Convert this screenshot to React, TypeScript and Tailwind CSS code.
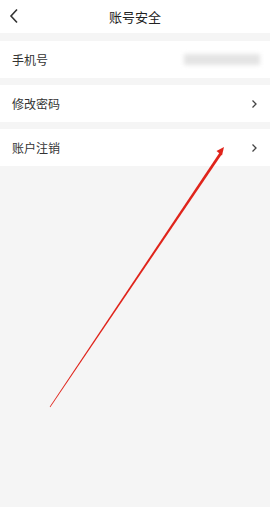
import React from 'react';

const font = { fontFamily: '"Noto Sans CJK SC", "Noto Sans", sans-serif' };

const Chevron = () => (
  <svg width="7" height="10" viewBox="0 0 7 10" fill="none">
    <path d="M1.5 1.5 L5 5 L1.5 8.5" stroke="#444" strokeWidth="1.3" />
  </svg>
);

const Row = ({ label, children }: { label: string; children?: React.ReactNode }) => (
  <div className="flex h-[37px] items-center justify-between bg-white pl-3 pr-[12px]">
    <span className="text-[12px] text-[#333]">{label}</span>
    {children}
  </div>
);

export default function App() {
  return (
    <div className="relative min-h-[507px] w-[270px] bg-[#f5f5f5]" style={font}>
      <div className="relative flex h-[33px] items-center justify-center bg-white">
        <button className="absolute left-[9px] top-[8px]">
          <svg width="10" height="16" viewBox="0 0 10 16" fill="none">
            <path d="M8 1.5 L2 8 L8 14.5" stroke="#333" strokeWidth="1.6" />
          </svg>
        </button>
        <span className="text-[13px] text-[#222]">账号安全</span>
      </div>

      <div className="mt-[8px] flex flex-col gap-[7px]">
        <div className="flex h-[37px] items-center justify-between bg-white pl-3">
          <span className="text-[12px] text-[#333]">手机号</span>
          <div className="mr-[10px] h-[11px] w-[76px] bg-[#e4e4e4] blur-[2px]" />
        </div>
        <Row label="修改密码">
          <Chevron />
        </Row>
        <Row label="账户注销">
          <Chevron />
        </Row>
      </div>

      <svg className="pointer-events-none absolute left-0 top-0" width="270" height="507">
        <polygon points="222.2,153.8 219.8,152.2 49.7,406.8 50.3,407.2" fill="#e0241b" />
        <polygon points="224,147 216.5,151 222,155.5" fill="#e0241b" />
      </svg>
    </div>
  );
}
